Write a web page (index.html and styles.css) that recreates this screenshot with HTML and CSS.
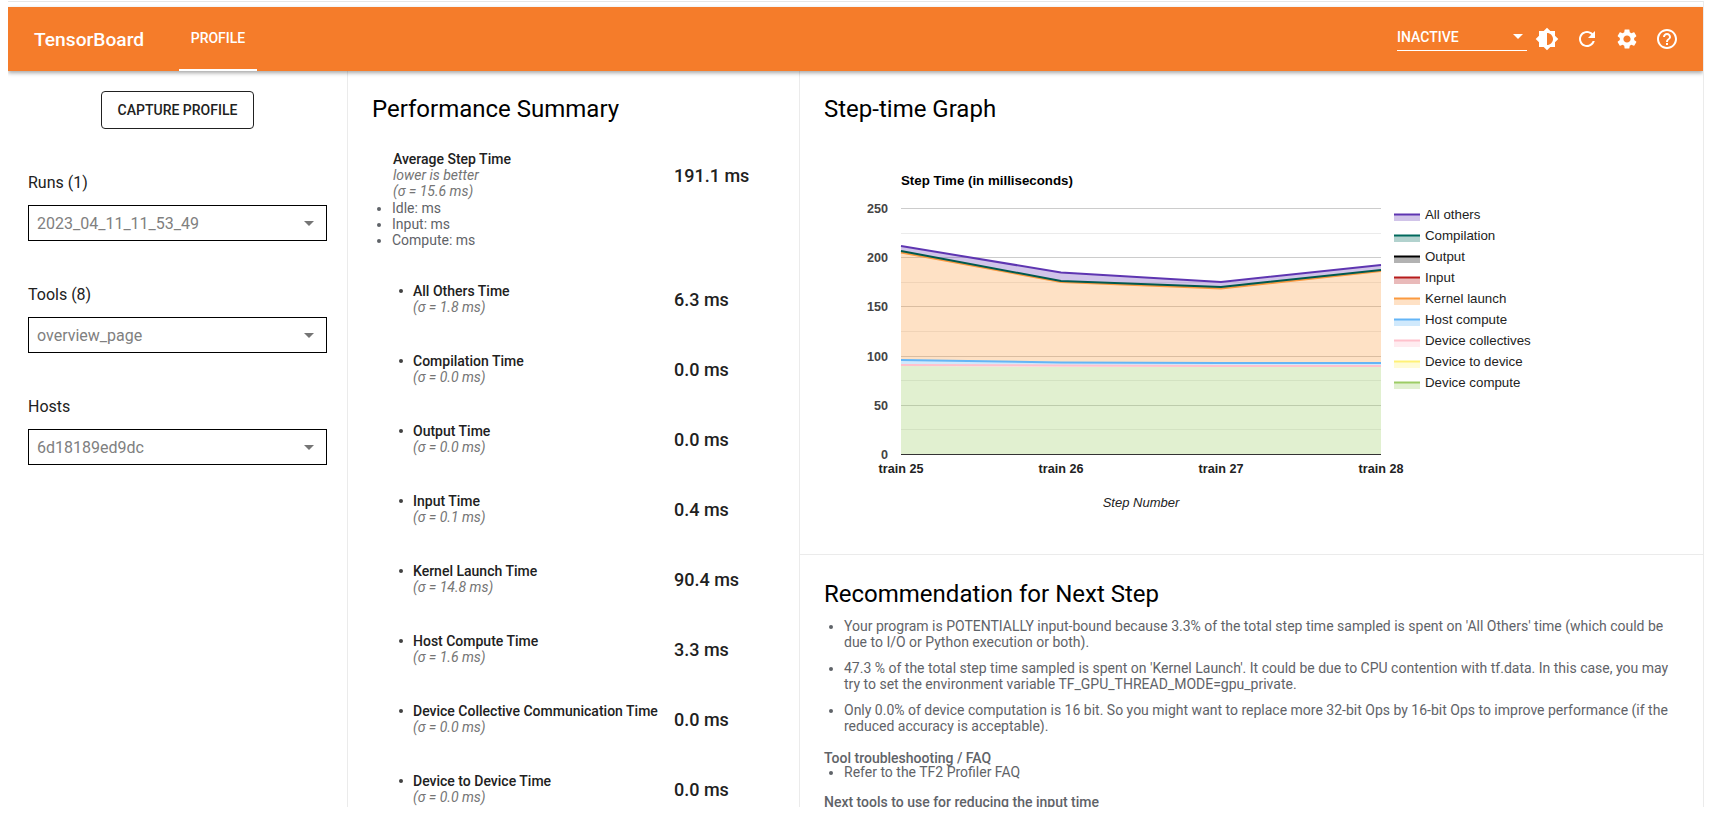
FILE: index.html
```html
<!DOCTYPE html>
<html lang="en">
<head>
    <meta charset="UTF-8">
    <title>TensorBoard</title>
    <link rel="stylesheet" href="styles.css">
</head>
<body>
    <div class="frame">
        <header class="toolbar">
            <span class="brand">TensorBoard</span>
            <span class="tab">PROFILE</span>
            <div class="toolbar-right">
                <div class="status-select">
                    <span>INACTIVE</span>
                    <i class="caret caret-white"></i>
                </div>
                <button class="icon-btn" aria-label="Toggle theme">
                    <svg viewBox="0 0 24 24"><path d="M20 15.31L23.31 12 20 8.69V4h-4.69L12 .69 8.69 4H4v4.69L.69 12 4 15.31V20h4.69L12 23.31 15.31 20H20v-4.69zM12 18V6c3.31 0 6 2.69 6 6s-2.69 6-6 6z"/></svg>
                </button>
                <button class="icon-btn" aria-label="Reload">
                    <svg viewBox="0 0 24 24"><path d="M17.65 6.35C16.2 4.9 14.21 4 12 4c-4.42 0-7.99 3.58-7.99 8s3.57 8 7.99 8c3.73 0 6.84-2.55 7.73-6h-2.08c-.82 2.33-3.04 4-5.65 4-3.31 0-6-2.69-6-6s2.69-6 6-6c1.66 0 3.14.69 4.22 1.78L13 11h7V4l-2.35 2.35z"/></svg>
                </button>
                <button class="icon-btn" aria-label="Settings">
                    <svg viewBox="0 0 24 24"><path d="M19.14 12.94c.04-.3.06-.61.06-.94 0-.32-.02-.64-.07-.94l2.03-1.58c.18-.14.23-.41.12-.61l-1.92-3.32c-.12-.22-.37-.29-.59-.22l-2.39.96c-.5-.38-1.03-.7-1.62-.94l-.36-2.54c-.04-.24-.24-.41-.48-.41h-3.84c-.24 0-.43.17-.47.41l-.36 2.54c-.59.24-1.13.57-1.62.94l-2.39-.96c-.22-.08-.47 0-.59.22L2.74 8.87c-.12.21-.08.47.12.61l2.03 1.58c-.05.3-.09.63-.09.94s.02.64.07.94l-2.03 1.58c-.18.14-.23.41-.12.61l1.92 3.32c.12.22.37.29.59.22l2.39-.96c.5.38 1.03.7 1.62.94l.36 2.54c.05.24.24.41.48.41h3.84c.24 0 .44-.17.47-.41l.36-2.54c.59-.24 1.13-.56 1.62-.94l2.39.96c.22.08.47 0 .59-.22l1.92-3.32c.12-.22.07-.47-.12-.61l-2.01-1.58zM12 15.6c-1.98 0-3.6-1.62-3.6-3.6s1.62-3.6 3.6-3.6 3.6 1.62 3.6 3.6-1.62 3.6-3.6 3.6z"/></svg>
                </button>
                <button class="icon-btn" aria-label="Help">
                    <svg viewBox="0 0 24 24"><path d="M11 18h2v-2h-2v2zm1-16C6.48 2 2 6.48 2 12s4.48 10 10 10 10-4.48 10-10S17.52 2 12 2zm0 18c-4.41 0-8-3.59-8-8s3.59-8 8-8 8 3.59 8 8-3.59 8-8 8zm0-14c-2.21 0-4 1.79-4 4h2c0-1.1.9-2 2-2s2 .9 2 2c0 2-3 1.75-3 5h2c0-2.25 3-2.5 3-5 0-2.21-1.79-4-4-4z"/></svg>
                </button>
            </div>
        </header>

        <main class="content">
            <aside class="sidebar">
                <div class="capture-wrap"><button class="capture-btn">CAPTURE PROFILE</button></div>
                <div class="field">
                    <div class="field-label">Runs (1)</div>
                    <div class="field-select"><span>2023_04_11_11_53_49</span><i class="caret"></i></div>
                </div>
                <div class="field">
                    <div class="field-label">Tools (8)</div>
                    <div class="field-select"><span>overview_page</span><i class="caret"></i></div>
                </div>
                <div class="field">
                    <div class="field-label">Hosts</div>
                    <div class="field-select"><span>6d18189ed9dc</span><i class="caret"></i></div>
                </div>
            </aside>

            <section class="summary">
                <h2 class="title">Performance Summary</h2>
                <div class="avg-row">
                    <div>
                        <div class="metric-name">Average Step Time</div>
                        <div class="metric-note">lower is better</div>
                        <div class="metric-note">(σ = 15.6 ms)</div>
                    </div>
                    <div class="metric-value">191.1 ms</div>
                </div>
                <ul class="avg-parts">
                    <li>Idle: ms</li>
                    <li>Input: ms</li>
                    <li>Compute: ms</li>
                </ul>
                <ul class="metrics">
                    <li><div class="metric-text"><div class="metric-name">All Others Time</div><div class="metric-note">(σ = 1.8 ms)</div></div><div class="metric-value">6.3 ms</div></li>
                    <li><div class="metric-text"><div class="metric-name">Compilation Time</div><div class="metric-note">(σ = 0.0 ms)</div></div><div class="metric-value">0.0 ms</div></li>
                    <li><div class="metric-text"><div class="metric-name">Output Time</div><div class="metric-note">(σ = 0.0 ms)</div></div><div class="metric-value">0.0 ms</div></li>
                    <li><div class="metric-text"><div class="metric-name">Input Time</div><div class="metric-note">(σ = 0.1 ms)</div></div><div class="metric-value">0.4 ms</div></li>
                    <li><div class="metric-text"><div class="metric-name">Kernel Launch Time</div><div class="metric-note">(σ = 14.8 ms)</div></div><div class="metric-value">90.4 ms</div></li>
                    <li><div class="metric-text"><div class="metric-name">Host Compute Time</div><div class="metric-note">(σ = 1.6 ms)</div></div><div class="metric-value">3.3 ms</div></li>
                    <li><div class="metric-text"><div class="metric-name">Device Collective Communication Time</div><div class="metric-note">(σ = 0.0 ms)</div></div><div class="metric-value">0.0 ms</div></li>
                    <li><div class="metric-text"><div class="metric-name">Device to Device Time</div><div class="metric-note">(σ = 0.0 ms)</div></div><div class="metric-value">0.0 ms</div></li>
                </ul>
            </section>

            <div class="right-col">
                <section class="graph">
                    <h2 class="title">Step-time Graph</h2>
                    <svg class="chart" viewBox="800 141 903 400" width="903" height="400">
                        <text class="chart-title" x="901" y="185">Step Time (in milliseconds)</text>

                        <g class="grid-minor">
                            <line x1="901" x2="1381" y1="233.5" y2="233.5"/>
                            <line x1="901" x2="1381" y1="282.5" y2="282.5"/>
                            <line x1="901" x2="1381" y1="331.5" y2="331.5"/>
                            <line x1="901" x2="1381" y1="380.5" y2="380.5"/>
                            <line x1="901" x2="1381" y1="429.5" y2="429.5"/>
                        </g>
                        <g class="grid-major">
                            <line x1="901" x2="1381" y1="208.5" y2="208.5"/>
                            <line x1="901" x2="1381" y1="257.5" y2="257.5"/>
                            <line x1="901" x2="1381" y1="306.5" y2="306.5"/>
                            <line x1="901" x2="1381" y1="356.5" y2="356.5"/>
                            <line x1="901" x2="1381" y1="405.5" y2="405.5"/>
                        </g>

                        <polygon class="area" fill="#9ccc65" points="901,366 1061,367 1221,367 1381,367 1381,454 901,454"/>
                        <polygon class="area" fill="#f8a8b8" points="901,364.5 1061,365.5 1221,366 1381,366 1381,367 1221,367 1061,367 901,366"/>
                        <polygon class="area" fill="#64b5f6" points="901,359.5 1061,362 1221,363 1381,362.5 1381,366 1221,366 1061,365.5 901,364.5"/>
                        <polygon class="area" fill="#fb9a40" points="901,251.5 1061,281 1221,287.5 1381,270 1381,362.5 1221,363 1061,362 901,359.5"/>
                        <polygon class="area" fill="#673ab7" points="901,246.5 1061,272.5 1221,282.5 1381,265 1381,270 1221,287.5 1061,281 901,251.5"/>

                        <polyline class="series" stroke="#fb9a40" points="901,252.5 1061,282 1221,288.5 1381,271"/>
                        <polyline class="series" stroke="#ffc1cc" points="901,365 1061,365.5 1221,366 1381,366"/>
                        <polyline class="series" stroke="#64b5f6" points="901,360 1061,362.5 1221,363 1381,363"/>
                        <polyline class="series" stroke="#00594d" points="901,251 1061,281 1221,287 1381,270"/>
                        <polyline class="series" stroke="#5e35b1" points="901,246 1061,272.5 1221,282 1381,265"/>

                        <line class="axis" x1="901" x2="1381" y1="454.5" y2="454.5"/>

                        <g class="tick-y">
                            <text x="888" y="213">250</text>
                            <text x="888" y="262">200</text>
                            <text x="888" y="311">150</text>
                            <text x="888" y="361">100</text>
                            <text x="888" y="410">50</text>
                            <text x="888" y="459">0</text>
                        </g>
                        <g class="tick-x">
                            <text x="901" y="473">train 25</text>
                            <text x="1061" y="473">train 26</text>
                            <text x="1221" y="473">train 27</text>
                            <text x="1381" y="473">train 28</text>
                        </g>
                        <text class="axis-title" x="1141" y="507">Step Number</text>

                        <g class="legend">
                            <rect fill="#673ab7" x="1394" y="214" width="26" height="7"/><line stroke="#5e35b1" x1="1394" x2="1420" y1="214.5" y2="214.5"/><text x="1425" y="219">All others</text>
                            <rect fill="#00695c" x="1394" y="235" width="26" height="7"/><line stroke="#00695c" x1="1394" x2="1420" y1="235.5" y2="235.5"/><text x="1425" y="240">Compilation</text>
                            <rect fill="#000000" x="1394" y="256" width="26" height="7"/><line stroke="#000000" x1="1394" x2="1420" y1="256.5" y2="256.5"/><text x="1425" y="261">Output</text>
                            <rect fill="#b71c1c" x="1394" y="277" width="26" height="7"/><line stroke="#b71c1c" x1="1394" x2="1420" y1="277.5" y2="277.5"/><text x="1425" y="282">Input</text>
                            <rect fill="#fb9a40" x="1394" y="298" width="26" height="7"/><line stroke="#fb9a40" x1="1394" x2="1420" y1="298.5" y2="298.5"/><text x="1425" y="303">Kernel launch</text>
                            <rect fill="#64b5f6" x="1394" y="319" width="26" height="7"/><line stroke="#64b5f6" x1="1394" x2="1420" y1="319.5" y2="319.5"/><text x="1425" y="324">Host compute</text>
                            <rect fill="#ffc1cc" x="1394" y="340" width="26" height="7"/><line stroke="#ffc1cc" x1="1394" x2="1420" y1="340.5" y2="340.5"/><text x="1425" y="345">Device collectives</text>
                            <rect fill="#fff176" x="1394" y="361" width="26" height="7"/><line stroke="#fff176" x1="1394" x2="1420" y1="361.5" y2="361.5"/><text x="1425" y="366">Device to device</text>
                            <rect fill="#9ccc65" x="1394" y="382" width="26" height="7"/><line stroke="#9ccc65" x1="1394" x2="1420" y1="382.5" y2="382.5"/><text x="1425" y="387">Device compute</text>
                        </g>
                    </svg>
                </section>

                <section class="recommendation">
                    <h2 class="title">Recommendation for Next Step</h2>
                    <ul class="rec-list">
                        <li>Your program is POTENTIALLY input-bound because 3.3% of the total step time sampled is spent on 'All Others' time (which could be due to I/O or Python execution or both).</li>
                        <li>47.3 % of the total step time sampled is spent on 'Kernel Launch'. It could be due to CPU contention with tf.data. In this case, you may try to set the environment variable TF_GPU_THREAD_MODE=gpu_private.</li>
                        <li>Only 0.0% of device computation is 16 bit. So you might want to replace more 32-bit Ops by 16-bit Ops to improve performance (if the reduced accuracy is acceptable).</li>
                    </ul>
                    <div class="rec-heading">Tool troubleshooting / FAQ</div>
                    <ul class="rec-faq">
                        <li>Refer to the TF2 Profiler FAQ</li>
                    </ul>
                    <div class="rec-heading rec-next">Next tools to use for reducing the input time</div>
                </section>
            </div>
        </main>
    </div>
</body>
</html>
```

FILE: styles.css
```css
html, body {
    margin: 0;
    height: 100%;
    overflow: hidden;
    background: #fff;
}

body {
    font-family: Roboto, "Noto Sans", sans-serif;
    color: #212121;
}

ul {
    margin: 0;
    padding: 0;
}

.frame {
    height: 800px;
    margin: 1px 0 0 8px;
    border-top: 1px solid #e6e6e6;
    border-right: 1px solid #ebebeb;
    width: 1695px;
    padding-top: 5px;
    overflow: hidden;
    display: flex;
    flex-direction: column;
    box-sizing: content-box;
}

.toolbar {
    height: 64px;
    flex: none;
    display: flex;
    align-items: center;
    background: #f57c2a;
    color: #fff;
    padding: 0 16px 0 26px;
    box-shadow: 0 2px 4px rgba(0, 0, 0, 0.35);
    position: relative;
    z-index: 2;
}

.brand {
    font-size: 19.2px;
    font-weight: 500;
    width: 145px;
}

.tab {
    width: 78px;
    height: 64px;
    line-height: 62px;
    box-sizing: border-box;
    text-align: center;
    font-size: 14px;
    font-weight: 500;
    border-bottom: 2px solid #fff;
}

.toolbar-right {
    margin-left: auto;
    display: flex;
    align-items: center;
}

.status-select {
    width: 130px;
    height: 28px;
    margin-top: -4px;
    box-sizing: border-box;
    border-bottom: 1px solid #fff;
    display: flex;
    align-items: center;
    justify-content: space-between;
    padding-right: 4px;
    font-size: 14px;
    font-weight: 500;
    margin-right: 0;
}

.icon-btn {
    width: 40px;
    height: 40px;
    border: 0;
    padding: 8px;
    background: none;
    display: block;
}

.icon-btn svg {
    width: 24px;
    height: 24px;
    display: block;
    fill: #fff;
}

.caret {
    width: 0;
    height: 0;
    border-left: 5px solid transparent;
    border-right: 5px solid transparent;
    border-top: 5px solid #757575;
}

.caret-white {
    border-top-color: #fff;
}

.content {
    flex: 1;
    min-height: 0;
    display: flex;
    overflow: hidden;
}

.sidebar {
    width: 340px;
    flex: none;
    box-sizing: border-box;
    border-right: 1px solid #ebebeb;
    padding: 20px 20px 0;
}

.capture-wrap {
    display: flex;
    justify-content: center;
    margin-bottom: 42px;
}

.capture-btn {
    width: 153px;
    height: 38px;
    background: #fff;
    border: 1px solid #212121;
    border-radius: 4px;
    font-family: inherit;
    font-size: 14px;
    font-weight: 500;
    color: #212121;
}

.field {
    margin-bottom: 42px;
}

.field-label {
    font-size: 16px;
    line-height: 24px;
    margin-bottom: 10px;
}

.field-select {
    height: 36px;
    box-sizing: border-box;
    border: 1px solid #000;
    display: flex;
    align-items: center;
    justify-content: space-between;
    padding: 0 12px 0 8px;
    font-size: 16px;
    color: #808080;
}

.summary {
    width: 452px;
    flex: none;
    box-sizing: border-box;
    border-right: 1px solid #ebebeb;
    padding: 22px 0 0 24px;
    overflow: hidden;
}

.title {
    margin: 0;
    font-size: 24px;
    line-height: 32px;
    font-weight: 400;
    color: #000;
}

.avg-row {
    display: flex;
    margin-top: 26px;
    align-items: center;
    padding-left: 21px;
}

.avg-row > div:first-child {
    width: 281px;
}

.metric-name {
    font-size: 14px;
    line-height: 16px;
    font-weight: 500;
    color: #212121;
}

.metric-note {
    font-size: 14px;
    line-height: 16px;
    font-style: italic;
    color: #757575;
}

.metric-value {
    font-size: 18px;
    font-weight: 500;
    color: #212121;
}

.avg-parts {
    padding-left: 20px;
    font-size: 14px;
    line-height: 16px;
    color: #5f6368;
    margin-top: 1px;
    margin-bottom: 35px;
}

.metrics {
    padding-left: 41px;
}

.metrics li {
    height: 70px;
    display: flex;
    align-items: flex-start;
    position: relative;
}

.metrics li::before {
    content: "";
    position: absolute;
    left: -14px;
    top: 6px;
    width: 4px;
    height: 4px;
    border-radius: 50%;
    background: #424242;
}

.metric-text {
    width: 261px;
    flex: none;
}

.metrics .metric-value {
    line-height: 34px;
}

.right-col {
    flex: 1;
    min-width: 0;
    display: flex;
    flex-direction: column;
}

.graph {
    height: 484px;
    flex: none;
    box-sizing: border-box;
    border-bottom: 1px solid #ebebeb;
    padding-top: 22px;
}

.graph .title {
    margin-left: 24px;
}

.chart {
    display: block;
    margin-top: 16px;
    font-family: "Liberation Sans", Arial, sans-serif;
    font-size: 13.3px;
}

.chart-title {
    font-weight: 700;
    fill: #000;
}

.grid-minor line {
    stroke: #ebebeb;
}

.grid-major line {
    stroke: #cccccc;
}

.area {
    fill-opacity: 0.3;
}

.series {
    fill: none;
    stroke-width: 2;
}

.axis {
    stroke: #333;
}

.tick-y text {
    text-anchor: end;
    font-size: 12.6px;
    font-weight: 700;
    fill: #444;
}

.tick-x text {
    text-anchor: middle;
    font-size: 12.6px;
    font-weight: 700;
    fill: #222;
}

.axis-title {
    text-anchor: middle;
    font-size: 13px;
    font-style: italic;
    fill: #222;
}

.legend rect {
    fill-opacity: 0.3;
}

.legend line {
    stroke-width: 2;
}

.legend text {
    fill: #222;
}

.recommendation {
    padding: 23px 24px 0;
    font-size: 14px;
    line-height: 16px;
    color: #5f6368;
}

.rec-list {
    margin-top: 8px;
    padding-left: 20px;
}

.rec-list li {
    margin-bottom: 10px;
}

.rec-heading {
    font-weight: 500;
    margin-top: 16px;
}

.rec-faq {
    padding-left: 20px;
    margin-top: -2px;
}

.rec-next {
    margin-top: 14px;
}
```
